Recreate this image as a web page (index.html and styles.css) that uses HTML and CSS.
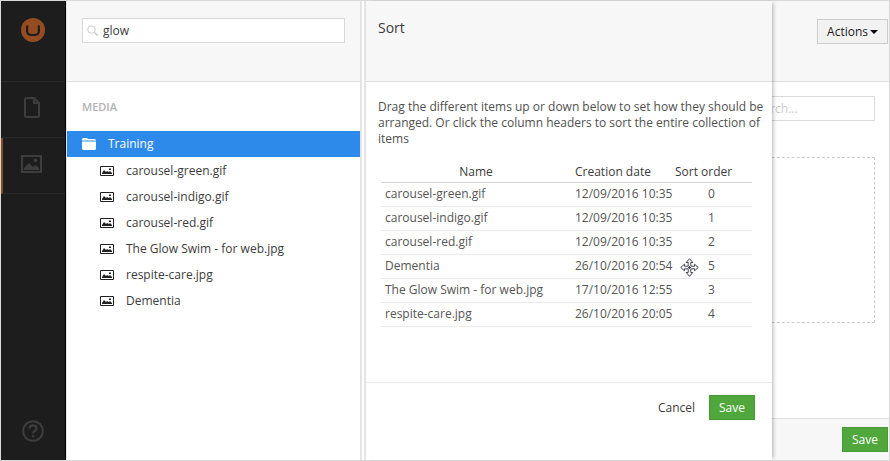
FILE: index.html
```html
<!DOCTYPE html>
<html lang="en">
<head>
<meta charset="utf-8">
<title>Media</title>
<link rel="stylesheet" href="styles.css">
</head>
<body>
<svg class="symbols">
  <symbol id="picture" viewBox="0 0 14 10">
    <path fill="none" stroke="currentColor" d="M.5.5h13v9H.5z"/>
    <path fill="currentColor" d="M2 8V7l2-3 2 2 1-1 2 1 1-1 2 2v1zM9 2.500h2v1.500H9z"/>
  </symbol>
</svg>
<div class="app">
  <nav class="rail" aria-label="Sections">
    <a class="rail-logo" href="#" aria-label="Home">
      <svg width="24" height="24" viewBox="0 0 24 24"><circle cx="12" cy="12" r="12" fill="#944c20"/><path d="M6.300 7.500c-.8 7.800-.3 9.500 5.700 9.500s6.500-1.700 5.700-9.500" fill="none" stroke="#1d1d1d" stroke-width="2.200"/></svg>
    </a>
    <a class="rail-item" href="#" aria-label="Content">
      <svg width="16" height="21" viewBox="0 0 16 21" fill="none" stroke="currentColor" stroke-width="2"><path d="M2.500 1H10l5 5v12.500a1.500 1.500 0 0 1-1.500 1.500h-11A1.500 1.500 0 0 1 1 18.500v-16A1.500 1.500 0 0 1 2.500 1z"/><path d="M10 1v5h5"/></svg>
    </a>
    <a class="rail-item active" href="#" aria-label="Media">
      <svg width="21" height="18" viewBox="0 0 21 18"><path d="M1 1h19v16H1z" fill="none" stroke="currentColor" stroke-width="2"/><path d="M3 15v-2l5-5 4 4 2-2 4 3v2z" fill="currentColor"/><circle cx="14.500" cy="5.500" r="1.800" fill="currentColor"/></svg>
    </a>
    <a class="rail-help" href="#" aria-label="Help">
      <svg width="22" height="22" viewBox="0 0 22 22" fill="none" stroke="currentColor" stroke-width="2"><circle cx="11" cy="11" r="9.800"/><path d="M7.500 8.500c0-4.300 7-4.300 7 0 0 2.500-3.500 2.500-3.500 5M11 15v2.300" stroke-width="2.300"/></svg>
    </a>
  </nav>

  <aside class="tree">
    <header class="bar tree-bar">
      <label class="search">
        <svg width="11" height="11" viewBox="0 0 11 11" fill="none" stroke="#ccc"><circle cx="4.500" cy="4.500" r="3.800"/><path d="M7.500 7.500l3 3" stroke-width="1.600"/></svg>
        <input type="text" value="glow" aria-label="Search media">
      </label>
    </header>
    <h2 class="tree-title">MEDIA</h2>
    <a class="node selected" href="#"><svg width="14" height="12" viewBox="0 0 14 12" fill="currentColor"><path d="M0 2.500V1l1-1h4l1 1h7l1 1v.5zM0 3.500h14V11l-1 1H1l-1-1z"/></svg>Training</a>
    <ul class="nodes">
      <li><a class="node" href="#"><svg width="14" height="10"><use href="#picture"/></svg>carousel-green.gif</a></li>
      <li><a class="node" href="#"><svg width="14" height="10"><use href="#picture"/></svg>carousel-indigo.gif</a></li>
      <li><a class="node" href="#"><svg width="14" height="10"><use href="#picture"/></svg>carousel-red.gif</a></li>
      <li><a class="node" href="#"><svg width="14" height="10"><use href="#picture"/></svg>The Glow Swim - for web.jpg</a></li>
      <li><a class="node" href="#"><svg width="14" height="10"><use href="#picture"/></svg>respite-care.jpg</a></li>
      <li><a class="node" href="#"><svg width="14" height="10"><use href="#picture"/></svg>Dementia</a></li>
    </ul>
  </aside>

  <div class="work">
    <main class="editor">
      <header class="bar editor-bar"><button class="btn btn-plain" type="button">Actions<span class="caret"></span></button></header>
      <div class="editor-body">
        <input class="filter" type="text" placeholder="search..." aria-label="Filter">
        <div class="dropzone"></div>
      </div>
      <footer class="editor-foot"><button class="btn btn-save" type="button">Save</button></footer>
    </main>

    <section class="dialog" role="dialog" aria-labelledby="sort-title">
      <header class="bar dialog-bar"><h1 id="sort-title">Sort</h1></header>
      <div class="dialog-body">
        <p>Drag the different items up or down below to set how they should be arranged. Or click the column headers to sort the entire collection of items</p>
        <table class="sort">
          <thead><tr><th>Name</th><th class="date">Creation date</th><th class="order">Sort order</th></tr></thead>
          <tbody>
            <tr><td>carousel-green.gif</td><td>12/09/2016 10:35</td><td class="num">0</td></tr>
            <tr><td>carousel-indigo.gif</td><td>12/09/2016 10:35</td><td class="num">1</td></tr>
            <tr><td>carousel-red.gif</td><td>12/09/2016 10:35</td><td class="num">2</td></tr>
            <tr><td>Dementia</td><td>26/10/2016 20:54</td><td class="num"><svg class="cursor" width="19" height="19" viewBox="0 0 19 19" fill="#fff" stroke="#444457"><path d="M9.500.7l3.300 3.800h-2v3.700h3.700v-2l3.800 3.300-3.800 3.300v-2h-3.700v3.700h2l-3.300 3.800-3.300-3.800h2v-3.700H4.500v2L.7 9.500l3.800-3.300v2h3.700V4.500h-2z"/><path d="M9.500 8v3M8 9.500h3"/></svg>5</td></tr>
            <tr><td>The Glow Swim - for web.jpg</td><td>17/10/2016 12:55</td><td class="num">3</td></tr>
            <tr><td>respite-care.jpg</td><td>26/10/2016 20:05</td><td class="num">4</td></tr>
          </tbody>
        </table>
      </div>
      <footer class="dialog-foot"><button class="btn btn-link" type="button">Cancel</button><button class="btn btn-save" type="button">Save</button></footer>
    </section>
  </div>
</div>
</body>
</html>
```
FILE: styles.css
```css
* { box-sizing: border-box; }

body {
  margin: 0;
  font: 12px/16px "Open Sans", "Noto Sans", sans-serif;
  color: #3c3c3c;
}

h1, h2, p, ul { margin: 0; padding: 0; }
ul { list-style: none; }
a { color: inherit; text-decoration: none; }
svg { flex: none; }
input, button { font: inherit; color: inherit; border-radius: 0; margin: 0; }
.symbols { display: none; }

.app {
  display: flex;
  min-height: 100vh;
  border: 1px solid #d9d9d9;
  background: #fff;
}

/* Section rail */
.rail {
  display: flex;
  flex-direction: column;
  flex: none;
  width: 65px;
  background: #1d1d1d;
  border-right: 1px solid #000;
  color: #3d3d3d;
}
.rail a { display: flex; justify-content: center; align-items: center; }
.rail .rail-logo {
  height: 81px;
  align-items: flex-start;
  padding-top: 17px;
  border-bottom: 1px solid #282828;
}
.rail .rail-item {
  height: 56px;
  padding: 4px 5px 8px 0;
  border-bottom: 1px solid #282828;
  border-left: 2px solid transparent;
}
.rail .rail-item.active { border-left-color: #8a4a24; }
.rail .rail-help { margin-top: auto; padding-bottom: 18px; }

/* Top bars share one height across panels */
.bar {
  display: flex;
  height: 81px;
  background: #f7f7f7;
  border-bottom: 1px solid #dedede;
}

/* Tree */
.tree { flex: none; width: 294px; border-left: 1px solid #e4e4e4; }
.tree-bar { padding: 17px 15px 0; }
.search {
  display: flex;
  align-items: center;
  gap: 5px;
  flex: 1;
  height: 25px;
  padding-left: 4px;
  background: #fff;
  border: 1px solid #d9d9d9;
}
.search input { flex: 1; min-width: 0; padding: 0; border: 0; outline: 0; background: none; }
.tree-title {
  padding: 17px 15px 16px;
  font-size: 11px;
  font-weight: 600;
  color: #b3b3b3;
}
.node { display: flex; align-items: center; gap: 12px; height: 26px; padding-left: 33px; }
.node.selected { padding-left: 15px; background: #2e8aea; color: #fff; }
.nodes { padding-top: 1px; }
.nodes svg { color: #222; }

/* Work area */
.work {
  position: relative;
  flex: 1;
  display: flex;
  border-left: 6px double #e4e4e4;
}
.editor { flex: 1; display: flex; flex-direction: column; }
.editor-bar { justify-content: flex-end; padding: 18px 1px 0 0; }
.editor-body { flex: 1; display: flex; flex-direction: column; gap: 36px; padding: 14px 14px 0; }
.filter {
  align-self: flex-end;
  width: 142px;
  height: 25px;
  padding: 0 17px;
  background: #fff;
  border: 1px solid #d9d9d9;
}
.filter::placeholder { color: #ccc; opacity: 1; }
.dropzone { height: 166px; border: 1px dashed #ccc; }
.editor-foot {
  display: flex;
  justify-content: flex-end;
  padding: 8px 1px;
  background: #f7f7f7;
  border-top: 1px solid #dedede;
}

.btn { height: 25px; padding: 0 9px; border: 1px solid #ccc; white-space: nowrap; }
.btn-plain { display: flex; align-items: center; gap: 2px; background: #f2f2f2; color: #222; }
.btn-save { background: #50a83c; border-color: #489a36; color: #fff; font-weight: 500; }
.btn-link { background: none; border-color: transparent; }
.caret { border: 4px solid transparent; border-top-color: #000; border-bottom: 0; }

/* Dialog slides over the editor */
.dialog {
  position: absolute;
  top: 0;
  bottom: 0;
  left: 0;
  display: flex;
  flex-direction: column;
  width: 406px;
  background: #fff;
  box-shadow: 3px 0 4px -2px rgba(0, 0, 0, .3);
}
.dialog-bar { padding: 17px 12px 0; }
.dialog h1 { font-size: 14px; line-height: 20px; font-weight: 400; }
.dialog-body { flex: 1; padding: 17px 4px 0 12px; }
.dialog-body p { color: #505050; }
.sort { width: calc(100% - 19px); margin: 12px 0 0 3px; border-collapse: collapse; table-layout: fixed; }
.sort th { height: 23px; padding: 3px 4px 0; font-weight: 500; border-bottom: 1px solid #d4d4d4; }
.sort td { height: 24px; padding: 0 4px; color: #555; border-bottom: 1px solid #ebebeb; white-space: nowrap; }
.sort .date { width: 100px; text-align: left; }
.sort .order { width: 81px; text-align: left; white-space: nowrap; }
.sort .num { position: relative; text-align: center; }
.cursor { position: absolute; left: 9px; top: 3px; }
.dialog-foot {
  display: flex;
  justify-content: flex-end;
  gap: 4px;
  height: 78px;
  padding: 12px 17px 0;
  border-top: 1px solid #ebebeb;
}
```
